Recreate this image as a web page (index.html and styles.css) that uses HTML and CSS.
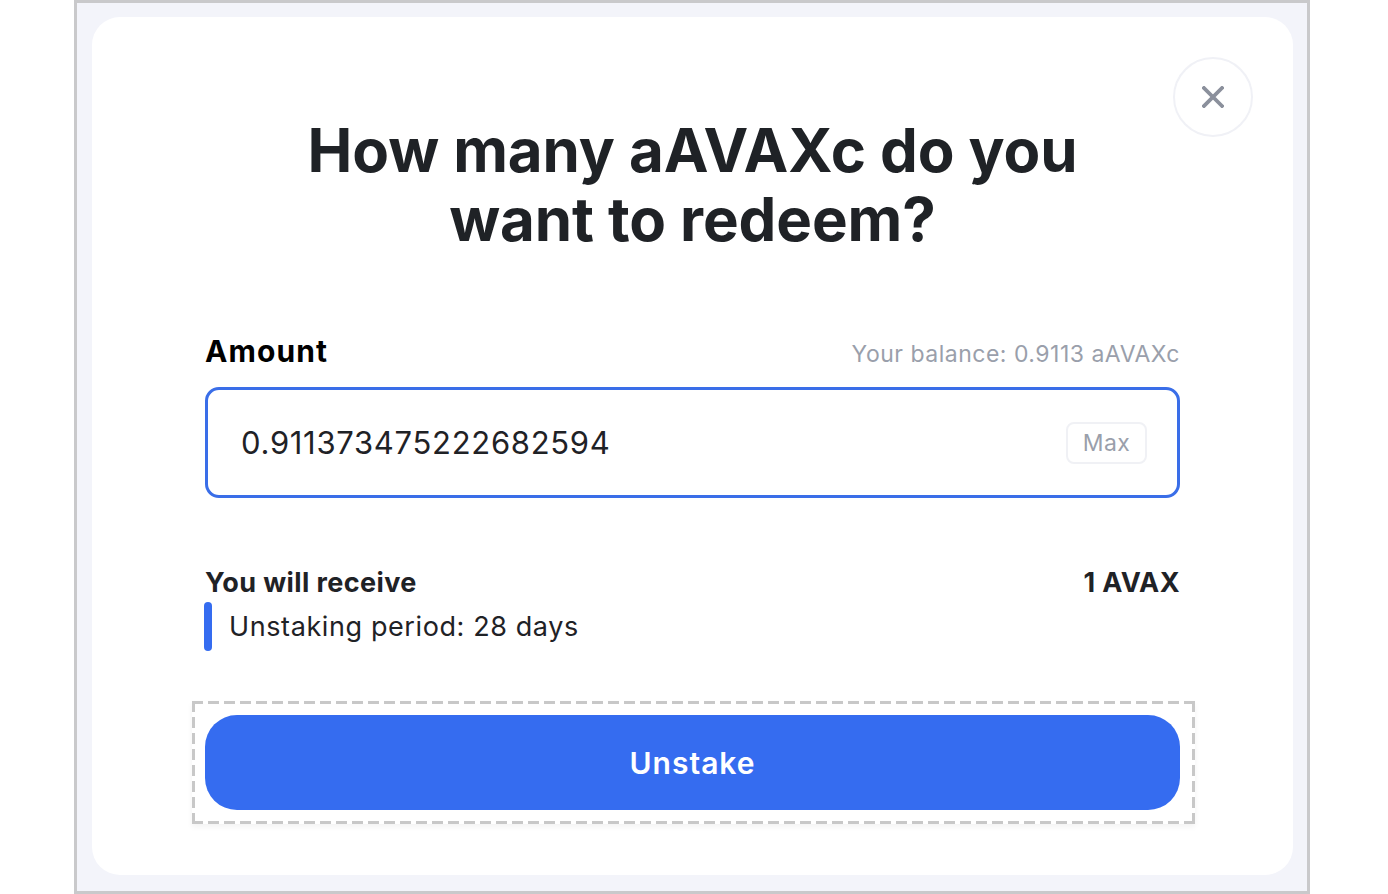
FILE: index.html
```html
<!DOCTYPE html>
<html lang="en">
<head>
<meta charset="utf-8">
<title>Unstake aAVAXc</title>
<link rel="stylesheet" href="styles.css">
</head>
<body>
<div class="frame">
  <div class="card">
    <button class="close" aria-label="Close">
      <svg width="22" height="22" viewBox="0 0 22 22"><path d="M2 2L20 20M20 2L2 20" stroke="#8b909c" stroke-width="3.8" stroke-linecap="square"/></svg>
    </button>
    <div class="content">
      <h1 class="title">How many aAVAXc do you<br>want to redeem?</h1>
      <div class="amount-head">
        <span class="amount-label">Amount</span>
        <span class="balance">Your balance: 0.9113 aAVAXc</span>
      </div>
      <div class="input-box">
        <span class="input-value">0.911373475222682594</span>
        <span class="max">Max</span>
      </div>
      <div class="receive">
        <div class="receive-row">
          <span class="receive-label">You will receive</span>
          <span class="receive-value">1 AVAX</span>
        </div>
        <div class="period">
          <span class="period-bar"></span>
          <span class="period-text">Unstaking period: 28 days</span>
        </div>
      </div>
      <div class="btn-wrap">
        <button class="unstake">Unstake</button>
      </div>
    </div>
  </div>
</div>
</body>
</html>
```
FILE: styles.css
```css
* { box-sizing: border-box; }
html, body { margin: 0; padding: 0; background: #fff; }
body {
  font-family: Inter, "Noto Sans", sans-serif;
  color: #1f2226;
  width: 1388px;
  height: 894px;
}
.frame {
  margin-left: 74px;
  width: 1236px;
  height: 894px;
  border: 3px solid #c9c9cb;
  background: #f3f4fa;
  padding: 14px 14px 16px 15px;
}
.card {
  position: relative;
  background: #fff;
  border-radius: 28px;
  height: 858px;
  padding: 0 113px;
}
.close {
  position: absolute;
  top: 40px;
  right: 40px;
  width: 80px;
  height: 80px;
  border-radius: 50%;
  border: 2px solid #f0f1f6;
  background: #fff;
  display: flex;
  align-items: center;
  justify-content: center;
  padding: 0;
}
.content {
  display: flex;
  flex-direction: column;
}
.title {
  margin: 0;
  padding-top: 99px;
  text-align: center;
  font-size: 60px;
  line-height: 69px;
  font-weight: 700;
  letter-spacing: -0.1px;
  color: #1f2226;
}
.amount-head {
  margin-top: 79px;
  display: flex;
  justify-content: space-between;
  align-items: baseline;
}
.amount-label {
  font-size: 30px;
  font-weight: 700;
  letter-spacing: 1.1px;
  color: #000;
}
.balance {
  font-size: 23px;
  letter-spacing: 0.5px;
  color: #9a9fab;
}
.input-box {
  margin-top: 18px;
  height: 111px;
  border: 3px solid #3a6ee8;
  border-radius: 14px;
  display: flex;
  align-items: center;
  justify-content: space-between;
  padding: 0 30px 0 33px;
}
.input-value {
  font-size: 31px;
  color: #1f2226;
  letter-spacing: 0.7px;
}
.max {
  border: 2px solid #f0f1f5;
  border-radius: 8px;
  height: 42px;
  width: 81px;
  display: flex;
  align-items: center;
  justify-content: center;
  font-size: 23px;
  letter-spacing: 0.4px;
  color: #9a9fab;
}
.receive {
  margin-top: 69px;
  display: flex;
  flex-direction: column;
}
.receive-row {
  display: flex;
  justify-content: space-between;
  align-items: center;
  height: 30px;
}
.receive-label, .receive-value {
  font-size: 27px;
  font-weight: 700;
  letter-spacing: 0.4px;
}
.period {
  margin-top: 5px;
  display: flex;
  align-items: center;
  gap: 17px;
}
.period-bar {
  width: 8px;
  height: 49px;
  border-radius: 4px;
  background: #356cf0;
  margin-left: -1px;
}
.period-text {
  font-size: 27px;
  letter-spacing: 0.6px;
  color: #1f2226;
}
.btn-wrap {
  margin: 50px -15px 0 -13px;
  padding: 14px 15px 14px 13px;
  background:
    repeating-linear-gradient(90deg, #c8c8c8 0 11px, transparent 11px 16px) left top / 100% 3px no-repeat,
    repeating-linear-gradient(90deg, #c8c8c8 0 11px, transparent 11px 16px) left bottom / 100% 3px no-repeat,
    repeating-linear-gradient(180deg, #c8c8c8 0 11px, transparent 11px 16px) left top / 3px 100% no-repeat,
    repeating-linear-gradient(180deg, #c8c8c8 0 11px, transparent 11px 16px) right top / 3px 100% no-repeat,
    #fff;
  box-shadow: 0 3px 6px rgba(0, 0, 0, 0.05);
}
.unstake {
  display: block;
  width: 100%;
  height: 95px;
  border: none;
  border-radius: 32px;
  background: #356cf0;
  color: #fff;
  font-family: Inter, "Noto Sans", sans-serif;
  font-size: 30px;
  font-weight: 600;
  letter-spacing: 1px;
}
```
